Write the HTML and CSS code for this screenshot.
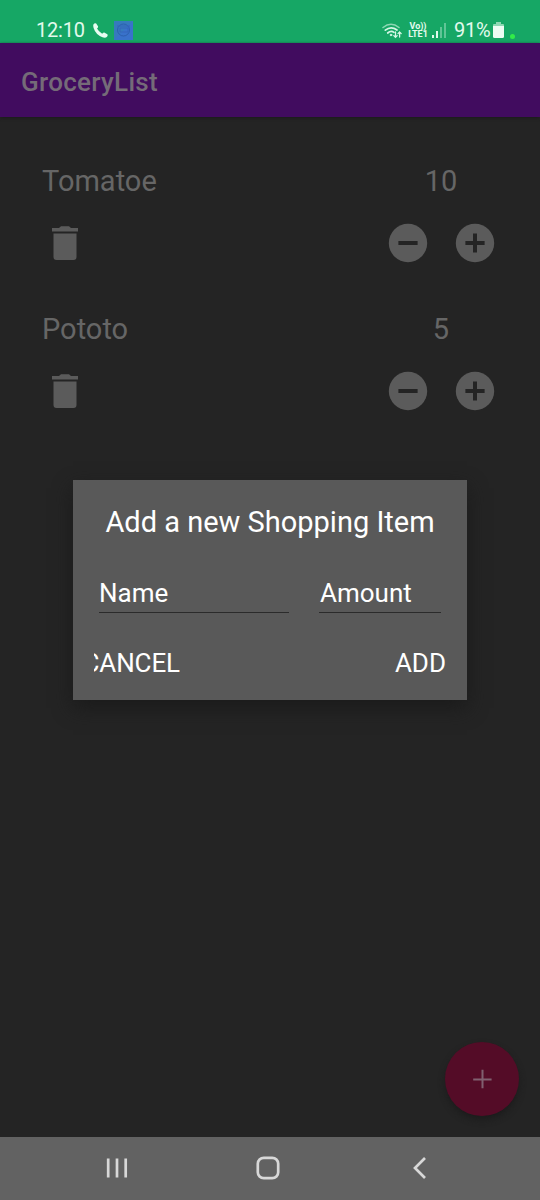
FILE: index.html
```html
<!DOCTYPE html>
<html lang="en">
<head>
<meta charset="utf-8">
<title>GroceryList</title>
<link rel="stylesheet" href="styles.css">
</head>
<body>
<div class="screen">
  <header class="status">
    <span class="clock">12:10</span>
    <svg class="call" width="15" height="15" viewBox="0 0 15 15"><path d="M.4 1.500Q1.700-.2 3.200.6L5 3.300Q5.400 4.400 4 5.600Q5.800 9 9.200 10.700Q10.500 9.300 11.700 9.700L14.300 11.300Q15.100 12.300 14.200 13.400Q12.700 15.300 9.500 14.300Q2.600 11.500.6 5Q0 2.800.4 1.500z"/></svg>
    <svg class="app" width="19" height="19" viewBox="0 0 19 19"><rect width="19" height="19" fill="#367abd"/><path d="M0 19L19 0v19z" fill="#3972cb"/><circle cx="9.500" cy="9" r="6" fill="none" stroke="#2c5fae"/><path d="M3 5h13M6 7h8v4H6z" fill="none" stroke="#3464bb"/></svg>
    <span class="spacer"></span>
    <svg class="wifi" width="20" height="16" viewBox="0 0 20 16" fill="none" stroke="#d5f7e5" stroke-linecap="round"><path d="M1 4.500Q9 -2 17 4.500" stroke="#8bd7b2" stroke-width="1.500"/><path d="M3.300 7.200Q9 2.500 15 7M5.700 10Q9 7 12 9.300" stroke-width="1.700"/><circle cx="9" cy="12" r=".8" fill="#d5f7e5"/><path d="M13.500 9v5M11.800 12.600l1.700 1.700 1.700-1.700M17.600 14V9M16 10.600l1.600-1.700 1.600 1.700" stroke-width="1.300"/></svg>
    <span class="volte"><span>Vo))</span><span>LTE1</span></span>
    <svg class="signal" width="14" height="15" viewBox="0 0 14 15"><path d="M0 12h2v3H0zM4 8h2v7H4z" fill="#e1faec"/><path d="M8 4h2v11H8zM12 0h2v15h-2z" fill="#60c596"/></svg>
    <span class="percent">91%</span>
    <svg class="battery" width="11" height="16" viewBox="0 0 11 16"><path d="M3 0h5v2h2q1 0 1 1v2H0V3q0-1 1-1h2z" fill="#8ed8b3"/><path d="M0 4h11v10.500q0 1.500-1.500 1.500h-8Q0 16 0 14.500z" fill="#edfcf3"/></svg>
    <span class="dot"></span>
  </header>
  <div class="appbar"><h1>GroceryList</h1></div>
  <main class="list">
    <section class="item">
      <div class="line"><span class="name">Tomatoe</span><span class="count">10</span></div>
      <div class="actions">
        <svg class="trash" width="28" height="36" viewBox="0 0 28 36"><path d="M2.500 8.500h23V32q0 3-3 3h-17q-3 0-3-3zM1 3h7l2-1.800h8L20 3h7v3.500H1z"/></svg>
        <svg class="round" width="40" height="40" viewBox="0 0 40 40"><circle cx="20" cy="20" r="19.200"/><path d="M10.400 20h19.200"/></svg>
        <svg class="round" width="40" height="40" viewBox="0 0 40 40"><circle cx="20" cy="20" r="19.200"/><path d="M10.400 20h19.200M20 10.400v19.200"/></svg>
      </div>
    </section>
    <section class="item">
      <div class="line"><span class="name">Pototo</span><span class="count">5</span></div>
      <div class="actions">
        <svg class="trash" width="28" height="36" viewBox="0 0 28 36"><path d="M2.500 8.500h23V32q0 3-3 3h-17q-3 0-3-3zM1 3h7l2-1.800h8L20 3h7v3.500H1z"/></svg>
        <svg class="round" width="40" height="40" viewBox="0 0 40 40"><circle cx="20" cy="20" r="19.200"/><path d="M10.400 20h19.200"/></svg>
        <svg class="round" width="40" height="40" viewBox="0 0 40 40"><circle cx="20" cy="20" r="19.200"/><path d="M10.400 20h19.200M20 10.400v19.200"/></svg>
      </div>
    </section>
  </main>
  <nav class="navbar">
    <svg width="22" height="22" viewBox="0 0 22 22"><path d="M2.200 1.500v19M11 1.500v19M19.700 1.500v19"/></svg>
    <svg class="home" width="24" height="24" viewBox="0 0 24 24"><rect x="1.800" y="1.800" width="20.400" height="20.400" rx="6"/></svg>
    <svg width="14" height="22" viewBox="0 0 14 22"><path d="M12 1L2 11l10 10"/></svg>
  </nav>
  <div class="fab"><svg width="20" height="20" viewBox="0 0 20 20"><path d="M10.500 .8v18.400M1.200 10.500h18.400"/></svg></div>
  <div class="dialog">
    <h2>Add a new Shopping Item</h2>
    <div class="fields"><div class="field wide">Name</div><div class="field">Amount</div></div>
    <div class="buttons"><div class="cancel"><span>CANCEL</span></div><span>ADD</span></div>
  </div>
</div>
</body>
</html>
```
FILE: styles.css
```css
* { box-sizing: border-box; }
body { margin: 0; font-family: Roboto, sans-serif; background: #242424; }
.screen { position: relative; width: 540px; height: 1200px; display: flex; flex-direction: column; overflow: hidden; background: #242424; }

.status { height: 43px; flex: none; display: flex; align-items: flex-start; padding: 0 25px 0 36px; background: #16a765; color: #e3faed; }
.clock { margin-top: 19px; width: 57px; font-size: 20px; line-height: 23px; letter-spacing: -0.2px; }
.call { margin-top: 23px; fill: #e8fcf1; }
.app { margin: 21px 0 0 6px; }
.spacer { flex: 1; }
.wifi { margin: 23px 6px 0 0; }
.volte { margin-top: 22px; width: 20px; display: flex; flex-direction: column; align-items: center; font-size: 9px; line-height: 8px; font-weight: 700; white-space: nowrap; }
.signal { margin: 23px 0 0 4px; }
.percent { margin: 19px 0 0 8px; width: 39px; font-size: 20px; line-height: 23px; letter-spacing: -0.3px; }
.battery { margin-top: 22px; }
.dot { width: 5px; height: 5px; margin: 34px 0 0 6px; border-radius: 50%; background: #32ec48; }

.appbar { height: 74px; flex: none; display: flex; align-items: center; padding: 3px 21px 0; background: #410c5f; box-shadow: 0 1px 3px #1b1b1b; }
h1 { margin: 0; font-size: 26px; line-height: 32px; font-weight: 500; letter-spacing: 0.3px; color: #756b78; }

.list { flex: 1; padding: 44px 45px 0 42px; }
.item { height: 148px; }
.line { display: flex; justify-content: space-between; font-size: 29px; line-height: 40px; color: #666; }
.count { width: 106px; margin-right: 1px; text-align: center; }
.actions { display: flex; align-items: center; height: 40px; margin-top: 22px; gap: 27px; }
.trash { margin: 0 auto 0 9px; fill: #5b5b5b; }
.round circle { fill: #5b5b5b; }
.round path { stroke: #242424; stroke-width: 4; }

.navbar { height: 63px; flex: none; display: flex; align-items: center; justify-content: space-between; padding: 0 113px 1px 106px; background: #626262; }
.navbar svg { fill: none; stroke: #d8d8d8; stroke-width: 2.7; }
.navbar .home { margin-right: 6px; }

.fab { position: absolute; right: 21px; bottom: 84px; width: 74px; height: 74px; border-radius: 50%; display: flex; align-items: center; justify-content: center; background: #540c27; box-shadow: 0 4px 6px #1c1c1c; }
.fab path { stroke: #806070; stroke-width: 2; }

.dialog { position: absolute; left: 73px; top: 480px; width: 394px; height: 220px; padding: 22px 21px 0; background: #595959; color: #fff; box-shadow: 0 8px 18px #1b1b1b; }
h2 { margin: 0; font-size: 29px; line-height: 40px; font-weight: 400; text-align: center; white-space: nowrap; }
.fields { display: flex; justify-content: space-between; margin: 32px 5px 0; font-size: 26px; line-height: 38px; }
.field { width: 122px; height: 39px; padding-left: 1px; border-bottom: 1px solid #2b2b2b; }
.wide { width: 190px; padding-left: 0; }
.buttons { display: flex; justify-content: space-between; margin-top: 35px; font-size: 26px; line-height: 30px; }
.cancel { width: 86px; overflow: hidden; display: flex; justify-content: flex-end; letter-spacing: -0.1px; }
```
